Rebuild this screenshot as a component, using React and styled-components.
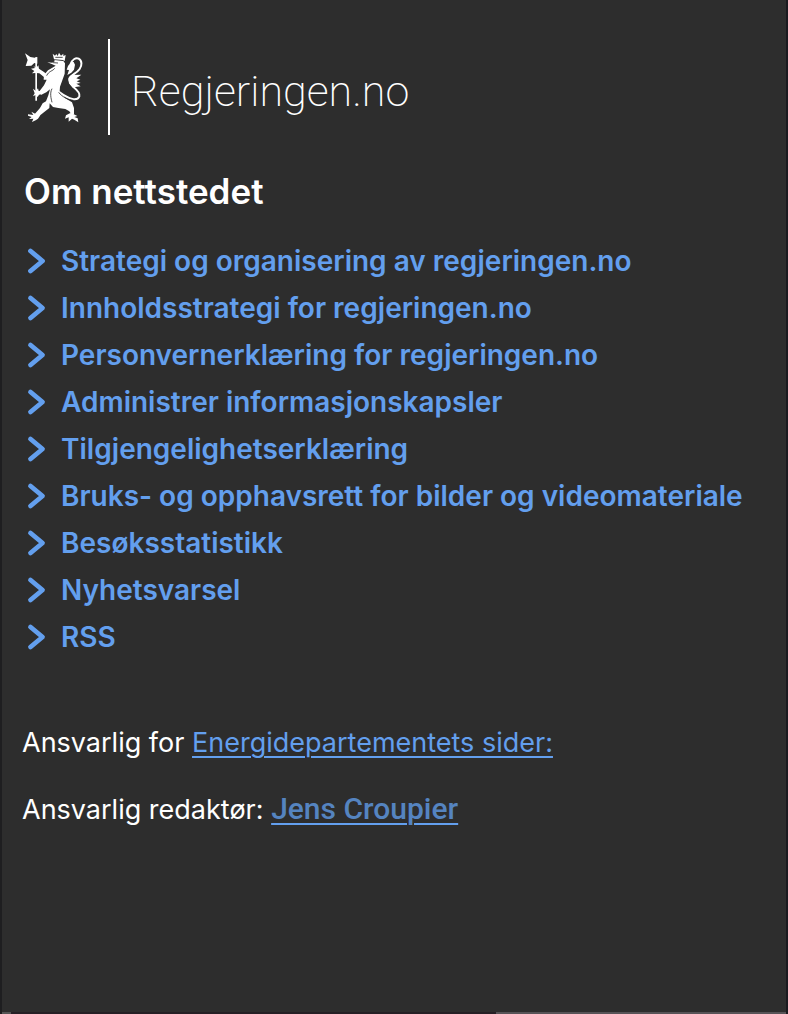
import React from 'react';
import styled, { createGlobalStyle } from 'styled-components';

const GlobalStyle = createGlobalStyle`
  *, *::before, *::after { box-sizing: border-box; }
  body { margin: 0; background: #2d2d2d; }
`;

const Page = styled.div`
  display: flex;
  flex-direction: column;
  min-height: 100vh;
  background: #2d2d2d;
  color: #fff;
  font-family: Inter, "Liberation Sans", sans-serif;
  border-left: 2px solid #1e1e20;
  border-right: 2px solid #1a1a1f;
`;

const Content = styled.div`
  flex: 1;
  padding: 39px 20px 24px 20px;
`;

const Brand = styled.a`
  display: flex;
  align-items: center;
  width: fit-content;
  height: 96px;
  color: #fff;
  text-decoration: none;
`;

const BrandName = styled.span`
  display: flex;
  align-items: center;
  height: 96px;
  margin-left: 24px;
  padding: 8px 0 0 21px;
  border-left: 2px solid #fff;
  font-family: Roboto, sans-serif;
  font-size: 43px;
  font-weight: 200;
  line-height: 52px;
`;

const Heading = styled.h2`
  margin: 32px 0 0 2px;
  font-size: 35px;
  font-weight: 600;
  line-height: 48px;
`;

const LinkList = styled.ul`
  margin: 22px 0 0;
  padding: 0;
  list-style: none;
`;

const LinkItem = styled.li`
  display: flex;
  align-items: center;
  height: 47px;
`;

const ListLink = styled.a`
  display: flex;
  align-items: center;
  gap: 12px;
  color: #639fee;
  font-size: 28px;
  font-weight: 600;
  line-height: 36px;
  text-decoration: none;
  white-space: nowrap;
`;

const Responsible = styled.div`
  display: flex;
  flex-direction: column;
  gap: 30px;
  margin-top: 65px;
`;

const Line = styled.p`
  margin: 0;
  font-size: 27px;
  font-weight: 400;
  line-height: 36px;
`;

const InlineLink = styled.a`
  color: ${(p) => (p.$editor ? '#5584c0' : '#639fee')};
  font-family: ${(p) => (p.$editor ? 'Roboto, sans-serif' : 'inherit')};
  font-size: ${(p) => (p.$editor ? '30px' : 'inherit')};
  font-weight: ${(p) => (p.$editor ? 500 : 400)};
  text-decoration: underline #639fee 2px;
  text-underline-offset: 4px;
`;

const BottomEdge = styled.div`
  display: flex;
  justify-content: space-between;
  height: 2px;
  background: #261f25;

  &::before { content: ""; width: 9px; background: #555; }
  &::after { content: ""; width: 37%; background: #575357; }
`;

const LionMark = styled.svg`
  margin-left: 2px;
`;

const ChevronMark = styled.svg`
  margin-left: -2px;
`;

const Lion = () => (
  <LionMark width="60" height="72" viewBox="42 36 180 216" fill="currentColor" aria-hidden="true">
    <path d="M45 43 L61 54 L74 56 L82 54 L82 74 L73 72 L64 80 L47 81 L53 63 Z" />
    <path d="M76 55h5v130h-5z" />
    <path d="M63 89 L75 87 L70 81 L79 86 L85 79 L87 89 L102 99 L110 106 L102 114 L88 103 L77 102 L66 103 L73 96 Z" />
    <path d="M128 44 L135 50 L139 45 L143 51 L147 41 L153 50 L160 44 L160 51 L167 48 L164 66 L158 63 L132 61 Z" />
    <path d="M132 63 L160 66 L165 73 L164 104 L157 124 L150 143 L149 156 L156 166 L166 178 L186 190 L192 207 L192 226 L184 226 L178 217 L166 210 L145 207 L129 204 L119 193 L118 207 L99 222 L80 237 L71 229 L90 207 L98 193 L108 187 L115 169 L120 151 L109 160 L94 167 L86 160 L102 139 L110 122 L101 122 L102 108 L114 94 L127 86 L137 80 L127 76 L112 70 L127 71 L135 66 Z" />
    <path d="M69 149 L78 156 L84 148 L86 156 L96 157 L98 165 L87 167 L83 174 L77 168 L69 172 L74 163 Z" />
    <path d="M77 225 L64 218 L70 228 L54 226 L54 230 L65 234 L57 240 L70 239 L66 249 L77 244 L84 239 L91 229 Z" />
    <path d="M181 222 L168 229 L165 239 L176 235 L176 248 L186 239 L193 242 L205 250 L203 238 L193 234 L202 231 L190 225 Z" />
    <path fill="none" stroke="currentColor" strokeWidth="6" d="M182 76 C187 60 198 55 206 59 C217 65 216 80 209 90 C201 102 183 108 178 118 C175 130 185 139 191 145 C202 154 211 162 208 172 C202 187 179 182 149 160" />
    <path d="M184 68 L174 81 L170 92 L177 93 L172 108 L184 101 L192 92 L195 77 L191 69 Z" />
    <path d="M176 119 L184 108 L214 107 L199 118 L211 122 L200 127 L212 132 L199 134 L212 142 L191 145 L178 134 Z" />
    <path fill="none" stroke="#2d2d2d" strokeWidth="2.5" d="M134 88 C128 97 117 95 110 110 M126 149 C119 162 123 178 126 190 M146 160 C156 174 176 183 190 184 M129 71 L144 72 M136 55 h22" />
  </LionMark>
);

const Chevron = () => (
  <ChevronMark width="29" height="28" viewBox="0 0 29 28" fill="none" aria-hidden="true">
    <path d="M10.5 4 L22.5 14 L10.5 24" stroke="currentColor" strokeWidth="4.8" strokeLinecap="round" strokeLinejoin="round" />
  </ChevronMark>
);

const links = [
  'Strategi og organisering av regjeringen.no',
  'Innholdsstrategi for regjeringen.no',
  'Personvernerklæring for regjeringen.no',
  'Administrer informasjonskapsler',
  'Tilgjengelighetserklæring',
  'Bruks- og opphavsrett for bilder og videomateriale',
  'Besøksstatistikk',
  'Nyhetsvarsel',
  'RSS',
];

export default function App() {
  return (
    <>
      <GlobalStyle />
      <Page>
        <Content>
          <Brand href="#">
            <Lion />
            <BrandName>Regjeringen.no</BrandName>
          </Brand>
          <Heading>Om nettstedet</Heading>
          <LinkList>
            {links.map((text) => (
              <LinkItem key={text}>
                <ListLink href="#"><Chevron />{text}</ListLink>
              </LinkItem>
            ))}
          </LinkList>
          <Responsible>
            <Line>Ansvarlig for <InlineLink href="#">Energidepartementets sider:</InlineLink></Line>
            <Line>Ansvarlig redaktør: <InlineLink href="#" $editor>Jens Croupier</InlineLink></Line>
          </Responsible>
        </Content>
        <BottomEdge />
      </Page>
    </>
  );
}
